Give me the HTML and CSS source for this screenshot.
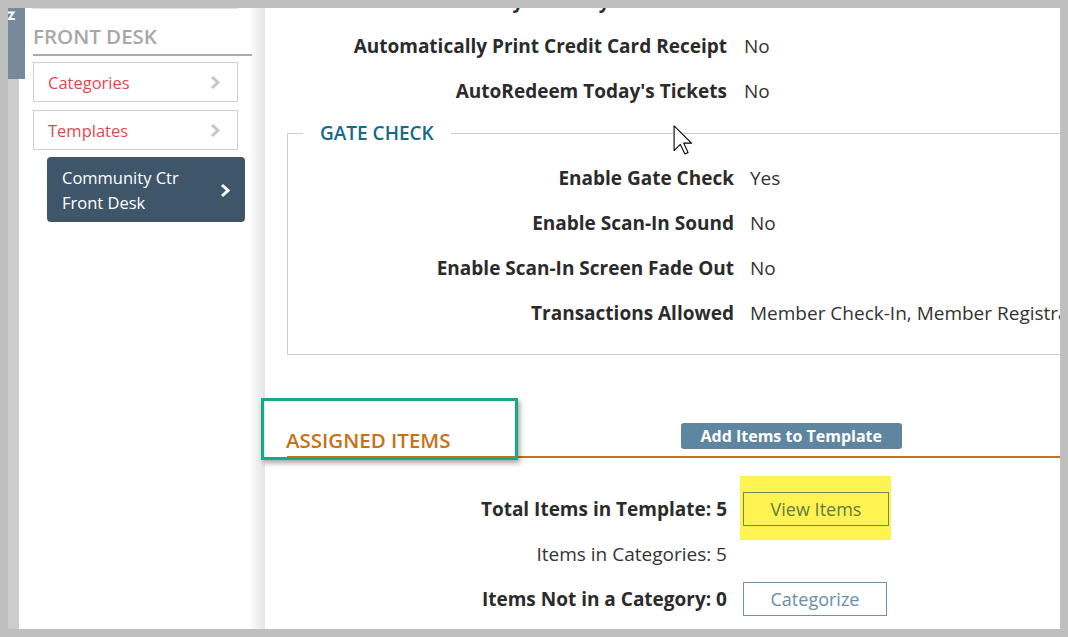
FILE: index.html
```html
<!DOCTYPE html>
<html>
  <head>
    <meta charset="UTF-8">
    <meta name="viewport" content="width=device-width, initial-scale=1">
    <link rel="stylesheet" href="styles.css">
  </head>
  <body>
    <div class="frame">
      <div class="rail">
        <div class="rail-tab">
          <svg class="rail-icon" width="8" height="10" viewBox="0 0 8 10"><path d="M0 1.5 H5.5 L1 8 H7" fill="none" stroke="#fff" stroke-width="2"/></svg>
        </div>
      </div>

      <aside class="sidebar">
        <div class="side-cut"></div>
        <h2 class="side-title">FRONT DESK</h2>
        <a class="side-link" href="#">Categories
          <svg width="10" height="15" viewBox="0 0 10 15"><polyline points="2,2 8,7.5 2,13" fill="none" stroke="#c6c6c6" stroke-width="3"/></svg>
        </a>
        <a class="side-link second" href="#">Templates
          <svg width="10" height="15" viewBox="0 0 10 15"><polyline points="2,2 8,7.5 2,13" fill="none" stroke="#c6c6c6" stroke-width="3"/></svg>
        </a>
        <a class="side-current" href="#">
          <span>Community Ctr<br>Front Desk</span>
          <svg width="11" height="15" viewBox="0 0 11 15"><polyline points="3,2 9,7.5 3,13" fill="none" stroke="#fff" stroke-width="3"/></svg>
        </a>
      </aside>

      <main class="main">
        <div class="main-inner">
          <div class="settings">
            <div class="row"><span class="label">Print Summary on Every Transaction</span><span class="value">No</span></div>
            <div class="row"><span class="label">Automatically Print Credit Card Receipt</span><span class="value">No</span></div>
            <div class="row"><span class="label">AutoRedeem Today's Tickets</span><span class="value">No</span></div>
          </div>

          <fieldset class="gate">
            <legend>GATE CHECK</legend>
            <div class="row"><span class="label">Enable Gate Check</span><span class="value">Yes</span></div>
            <div class="row"><span class="label">Enable Scan-In Sound</span><span class="value">No</span></div>
            <div class="row"><span class="label">Enable Scan-In Screen Fade Out</span><span class="value">No</span></div>
            <div class="row"><span class="label">Transactions Allowed</span><span class="value">Member Check-In, Member Registration, Punch Pass Check-In</span></div>
          </fieldset>

          <section class="assigned">
            <div class="assigned-head">
              <h3>ASSIGNED ITEMS</h3>
              <button class="btn-add">Add Items to Template</button>
              <div class="annot"></div>
            </div>
            <div class="counts">
              <div class="row">
                <span class="label">Total Items in Template: 5</span>
                <span class="highlight"><button class="btn-outline btn-view">View Items</button></span>
              </div>
              <div class="row">
                <span class="label plain">Items in Categories: 5</span>
                <span></span>
              </div>
              <div class="row">
                <span class="label">Items Not in a Category: 0</span>
                <button class="btn-outline btn-cat">Categorize</button>
              </div>
            </div>
          </section>
        </div>
      </main>
    </div>

    <svg class="cursor" width="20" height="31" viewBox="-0.5 -0.5 12.5 20"><path d="M0 0 V16 L4 12 L7 18.2 L9 17.3 L6.2 11.2 H11.2 Z" fill="#fff" stroke="#000" stroke-width="0.7" stroke-linejoin="round"/></svg>
  </body>
</html>
```

FILE: styles.css
```css
html,
body {
  margin: 0;
  height: 100%;
  overflow: hidden;
}
body {
  box-sizing: border-box;
  padding: 8px;
  background: #bfbfbf;
  font-family: "Open Sans", "Liberation Sans", sans-serif;
  color: #333;
}
.frame {
  display: flex;
  height: 621px;
  background: #fff;
  overflow: hidden;
}

/* left rail */
.rail {
  flex: 0 0 11px;
  min-width: 0;
  background: #cccccc;
}
.rail-tab {
  position: relative;
  z-index: 1;
  width: 17px;
  height: 71px;
  background: #778a9b;
}
.rail-icon {
  display: block;
  padding-top: 3px;
}

/* sidebar */
.sidebar {
  flex: 0 0 246px;
  box-sizing: border-box;
  padding: 0 13px 0 14px;
  background: linear-gradient(to right, #fff 230px, #f2f2f2 237px, #e6e6e6 246px);
}
.side-cut {
  height: 1px;
  margin-right: 14px;
  background: #e0e0e0;
}
.side-title {
  margin: 14px 0 0;
  padding-bottom: 5px;
  border-bottom: 2px solid #aaaaaa;
  font-size: 20.5px;
  font-weight: 600;
  line-height: 26px;
  color: #a7a7a7;
}
.side-link {
  display: flex;
  justify-content: space-between;
  align-items: center;
  box-sizing: border-box;
  height: 40px;
  margin: 6px 14px 0 0;
  padding: 0 17px 0 14px;
  border: 1px solid #cfcfcf;
  font-size: 16.5px;
  color: #e2474f;
  text-decoration: none;
}
.side-link.second {
  margin-top: 8px;
}
.side-current {
  display: flex;
  justify-content: space-between;
  align-items: center;
  margin: 7px 7px 0 14px;
  padding: 8px 15px 7px 15px;
  border-radius: 4px;
  background: #3f566a;
  font-size: 16.5px;
  line-height: 25px;
  color: #fff;
  text-decoration: none;
}

/* main column */
.main {
  flex: 1;
  min-width: 0;
}
.main-inner {
  width: 900px;
  margin-top: -30px;
  padding-left: 22px;
}
.row {
  display: grid;
  grid-template-columns: 440px max-content;
  column-gap: 17px;
  align-items: center;
  height: 45px;
  white-space: nowrap;
  font-size: 19px;
}
.label {
  text-align: right;
  font-weight: 700;
  color: #2b2b2b;
}
.label.plain {
  font-weight: 400;
  color: #333;
}
.value {
  color: #333;
}

.gate {
  margin: 7px 0 0;
  padding: 9px 0 19px;
  border: 1px solid #cdcdcd;
  min-width: 0;
}
.gate legend {
  margin-left: 15px;
  padding: 0 17px;
  font-size: 19px;
  font-weight: 600;
  line-height: 26px;
  color: #146b8c;
}
.gate .row {
  grid-template-columns: 446px max-content;
  column-gap: 16px;
}

/* assigned items */
.assigned-head {
  position: relative;
  display: flex;
  align-items: flex-end;
  margin-top: 68px;
  border-bottom: 2px solid #c8711a;
}
.assigned-head h3 {
  margin: 0 0 0 -1px;
  padding-bottom: 4px;
  font-size: 20.5px;
  font-weight: 600;
  line-height: 24px;
  color: #c8711a;
}
.btn-add {
  box-sizing: border-box;
  height: 26px;
  margin: 0 0 7px 230px;
  padding: 0 20px;
  border: none;
  border-radius: 3px;
  background: #5e86a0;
  font-family: inherit;
  font-size: 16px;
  font-weight: 700;
  color: #fff;
}
.annot {
  position: absolute;
  left: -26px;
  top: -25px;
  width: 257px;
  height: 62px;
  box-sizing: border-box;
  border: 3px solid #17a98a;
  box-shadow: 2px 3px 5px rgba(0, 0, 0, 0.35);
  pointer-events: none;
}
.counts {
  margin-top: 28px;
}
.counts .row {
  column-gap: 16px;
}
.highlight {
  justify-self: start;
  display: inline-block;
  margin: -16px -2px -14px -3px;
  padding: 16px 2px 14px 3px;
  background: #fff352;
}
.btn-outline {
  display: block;
  box-sizing: border-box;
  height: 34px;
  padding: 0;
  background: transparent;
  font-family: inherit;
  font-size: 18px;
}
.btn-view {
  width: 146px;
  border: 1px solid #6e8a55;
  color: #5f7d40;
}
.btn-cat {
  justify-self: start;
  width: 144px;
  border: 1px solid #6d93ad;
  color: #6b8ea8;
  background: #fff;
}

.cursor {
  position: absolute;
  left: 673px;
  top: 125px;
}
```
